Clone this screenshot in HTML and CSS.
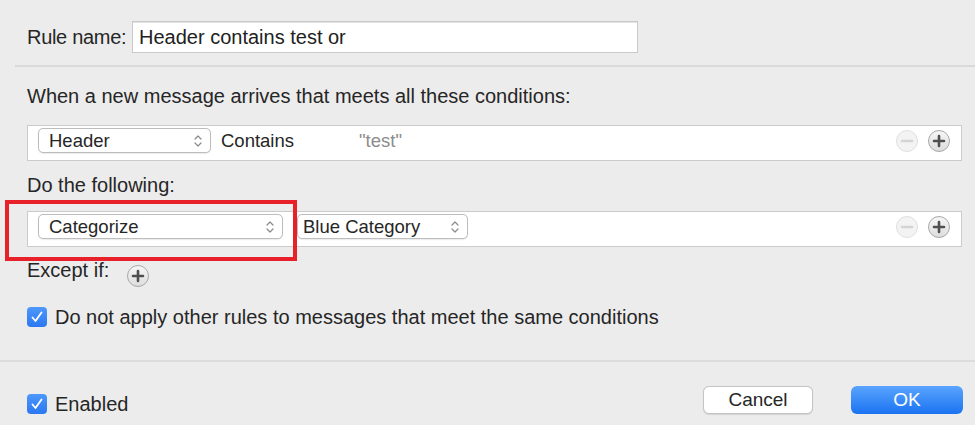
FILE: index.html
```html
<!DOCTYPE html>
<html>
<head>
<meta charset="utf-8">
<link rel="stylesheet" href="styles.css">
</head>
<body>
<div class="dialog">
  <div class="name-row">
    <span class="label">Rule name:</span>
    <div class="text-input">Header contains test or</div>
  </div>
  <div class="sep sep-top"></div>

  <div class="section-title first">When a new message arrives that meets all these conditions:</div>
  <div class="rule-row">
    <div class="popup popup-header"><span>Header</span>
      <svg class="chev" viewBox="0 0 8 14" width="8" height="14"><path d="M1 5 L4 2 L7 5 M1 9 L4 12 L7 9" fill="none" stroke="#8a8a8a" stroke-width="1.2" stroke-linecap="round" stroke-linejoin="round"/></svg>
    </div>
    <span class="contains">Contains</span>
    <span class="value">"test"</span>
    <div class="row-btns">
      <svg class="rbtn" viewBox="0 0 24 24" width="24" height="24"><circle cx="12" cy="12" r="10.5" fill="#f3f3f3" stroke="#e0e0e0" stroke-width="1"/><path d="M7 12 H17" stroke="#d4d4d4" stroke-width="2.6" stroke-linecap="round"/></svg>
      <svg class="rbtn" viewBox="0 0 24 24" width="24" height="24"><defs><linearGradient id="pg1" x1="0" y1="0" x2="0" y2="1"><stop offset="0" stop-color="#f7f7f7"/><stop offset="1" stop-color="#dcdcdc"/></linearGradient></defs><circle cx="12" cy="12" r="10.5" fill="url(#pg1)" stroke="#a9a9a9" stroke-width="1"/><path d="M7 12 H17 M12 7 V17" stroke="#4f4f4f" stroke-width="2.6" stroke-linecap="round"/></svg>
    </div>
  </div>

  <div class="section-title">Do the following:</div>
  <div class="rule-row second">
    <div class="popup popup-cat"><span>Categorize</span>
      <svg class="chev" viewBox="0 0 8 14" width="8" height="14"><path d="M1 5 L4 2 L7 5 M1 9 L4 12 L7 9" fill="none" stroke="#8a8a8a" stroke-width="1.2" stroke-linecap="round" stroke-linejoin="round"/></svg>
    </div>
    <div class="popup popup-blue"><span>Blue Category</span>
      <svg class="chev" viewBox="0 0 8 14" width="8" height="14"><path d="M1 5 L4 2 L7 5 M1 9 L4 12 L7 9" fill="none" stroke="#8a8a8a" stroke-width="1.2" stroke-linecap="round" stroke-linejoin="round"/></svg>
    </div>
    <div class="row-btns">
      <svg class="rbtn" viewBox="0 0 24 24" width="24" height="24"><circle cx="12" cy="12" r="10.5" fill="#f3f3f3" stroke="#e0e0e0" stroke-width="1"/><path d="M7 12 H17" stroke="#d4d4d4" stroke-width="2.6" stroke-linecap="round"/></svg>
      <svg class="rbtn" viewBox="0 0 24 24" width="24" height="24"><defs><linearGradient id="pg2" x1="0" y1="0" x2="0" y2="1"><stop offset="0" stop-color="#f7f7f7"/><stop offset="1" stop-color="#dcdcdc"/></linearGradient></defs><circle cx="12" cy="12" r="10.5" fill="url(#pg2)" stroke="#a9a9a9" stroke-width="1"/><path d="M7 12 H17 M12 7 V17" stroke="#4f4f4f" stroke-width="2.6" stroke-linecap="round"/></svg>
    </div>
  </div>

  <div class="except-row">
    <span class="label">Except if:</span>
    <svg class="rbtn" viewBox="0 0 24 24" width="24" height="24"><defs><linearGradient id="pg3" x1="0" y1="0" x2="0" y2="1"><stop offset="0" stop-color="#f7f7f7"/><stop offset="1" stop-color="#dcdcdc"/></linearGradient></defs><circle cx="12" cy="12" r="10.5" fill="url(#pg3)" stroke="#a9a9a9" stroke-width="1"/><path d="M7 12 H17 M12 7 V17" stroke="#4f4f4f" stroke-width="2.6" stroke-linecap="round"/></svg>
  </div>

  <div class="check-row stop-row">
    <span class="checkbox"><svg viewBox="0 0 20 20" width="20" height="20"><path d="M5.5 10.5 L8.5 14 L14.5 5.5" fill="none" stroke="#fff" stroke-width="1.8" stroke-linecap="round" stroke-linejoin="round"/></svg></span>
    <span class="label">Do not apply other rules to messages that meet the same conditions</span>
  </div>

  <div class="sep sep-bottom"></div>

  <div class="footer">
    <div class="check-row">
      <span class="checkbox"><svg viewBox="0 0 20 20" width="20" height="20"><path d="M5.5 10.5 L8.5 14 L14.5 5.5" fill="none" stroke="#fff" stroke-width="1.8" stroke-linecap="round" stroke-linejoin="round"/></svg></span>
      <span class="label">Enabled</span>
    </div>
    <div class="buttons">
      <div class="btn btn-cancel">Cancel</div>
      <div class="btn btn-ok">OK</div>
    </div>
  </div>

  <div class="highlight"></div>
</div>
</body>
</html>
```

FILE: styles.css
```css
* { box-sizing: border-box; }
html, body {
  margin: 0;
  padding: 0;
  background: #ececec;
}
body {
  font-family: "Liberation Sans", Arial, sans-serif;
  font-size: 20px;
  color: #262626;
  width: 975px;
  height: 425px;
  overflow: hidden;
}
.dialog {
  position: relative;
  width: 975px;
  height: 425px;
}
.label { line-height: 24px; white-space: nowrap; }

.name-row {
  display: flex;
  align-items: center;
  padding: 21px 0 0 27px;
  gap: 9px;
}
.name-row .label { width: 96px; letter-spacing: -0.3px; }
.text-input {
  width: 506px;
  height: 32px;
  background: #fff;
  border: 1px solid #c9c9c9;
  box-shadow: inset 0 1px 0 #e4e4e4;
  padding: 0 6px;
  line-height: 30px;
  color: #222;
}
.sep { height: 2px; background: #d9d9d9; }
.sep-top { margin: 12px 0 0 15px; }

.section-title {
  padding-left: 27px;
  line-height: 24px;
  margin-top: 12px;
}
.section-title.first { margin-top: 17px; }

.rule-row {
  margin: 17px 13px 0 27px;
  height: 36px;
  background: #fff;
  border: 1px solid #cbcbcb;
  display: flex;
  align-items: flex-start;
  padding: 2px 10px 0 10px;
  font-size: 18.5px;
}
.rule-row.second { margin-top: 14px; }
.popup {
  height: 25px;
  border: 1px solid #bdbdbd;
  border-radius: 5px;
  background: #fff;
  display: flex;
  align-items: center;
  justify-content: space-between;
  padding: 0 8px 0 10px;
  line-height: 23px;
  box-shadow: 0 0.5px 1px rgba(0,0,0,0.08);
}
.popup-header { width: 173px; }
.popup-cat { width: 245px; }
.popup-blue { width: 171px; margin-left: 14px; padding-left: 5px; }
.chev { flex: none; }
.contains { margin-left: 10px; width: 138px; line-height: 25px; }
.value { color: #8c8c8c; line-height: 25px; }
.row-btns {
  margin-left: auto;
  display: flex;
  gap: 8px;
  padding-top: 1px;
}
.rbtn { display: block; flex: none; }

.except-row {
  display: flex;
  align-items: center;
  padding-left: 27px;
  margin-top: 10px;
  gap: 17px;
  height: 26px;
}
.except-row .rbtn { margin-top: 11px; }

.check-row {
  display: flex;
  align-items: center;
  gap: 8px;
}
.stop-row { padding-left: 27px; margin-top: 22px; }
.checkbox {
  width: 20px;
  height: 20px;
  border-radius: 4px;
  background: linear-gradient(#4c98fa, #2b78f2);
  display: block;
  flex: none;
}
.checkbox svg { display: block; }

.sep-bottom { margin-top: 31px; height: 2px; background: #dcdcdc; }

.footer {
  display: flex;
  justify-content: space-between;
  align-items: center;
  padding: 0 12px 0 27px;
  margin-top: 22px;
}
.footer .check-row { margin-top: 8px; }
.buttons { display: flex; gap: 38px; }
.btn {
  height: 28px;
  border-radius: 6px;
  text-align: center;
  line-height: 28px;
  font-size: 19px;
}
.btn-cancel {
  width: 110px;
  background: #fff;
  border: 1px solid #c4c4c4;
  line-height: 26px;
  box-shadow: 0 0.5px 1px rgba(0,0,0,0.1);
}
.btn-ok {
  width: 112px;
  color: #fff;
  background: linear-gradient(#5aa4ff, #1b73f1);
}

.highlight {
  position: absolute;
  left: 5px;
  top: 200px;
  width: 292px;
  height: 61px;
  border: 4px solid #e8202a;
}
```
